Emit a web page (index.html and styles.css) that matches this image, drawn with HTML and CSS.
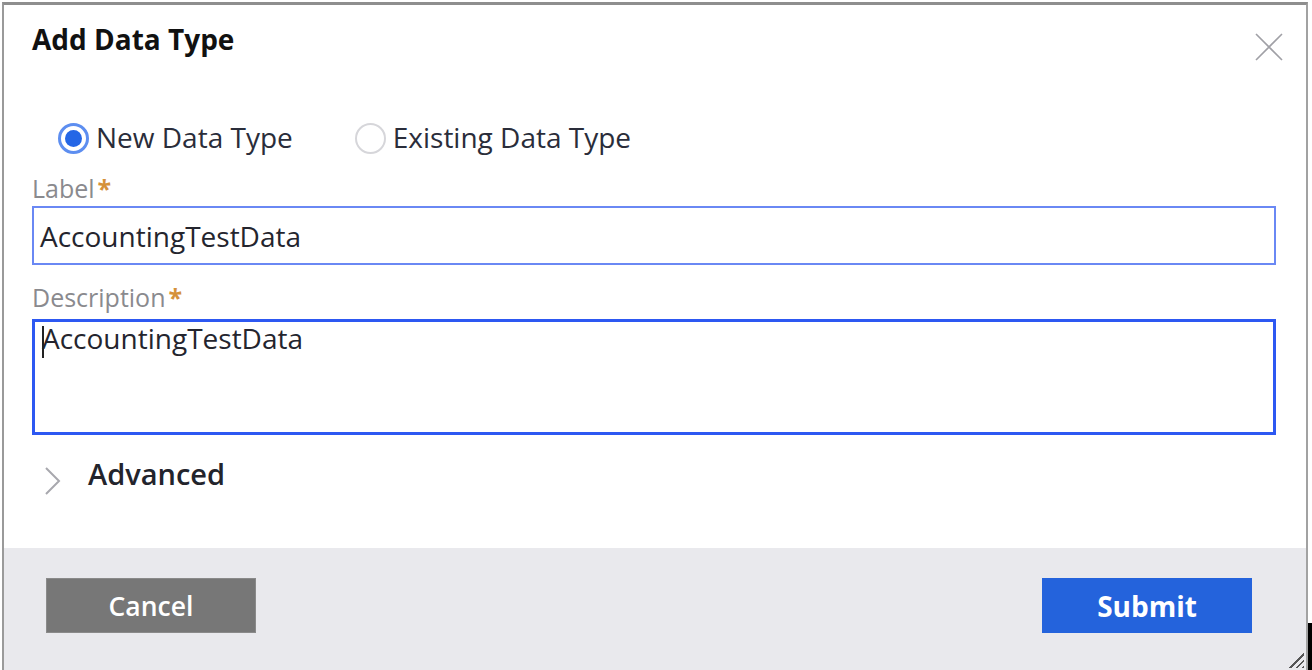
FILE: index.html
```html
<!DOCTYPE html>
<html>
<head>
<meta charset="utf-8">
<link rel="stylesheet" href="styles.css">
</head>
<body>
<div class="dialog">
  <div class="header">
    <h1 class="title">Add Data Type</h1>
    <svg class="close" width="28" height="28" viewBox="0 0 28 28"><path d="M1 1 L27 27 M27 1 L1 27" stroke="#a0a0a6" stroke-width="1.6" fill="none"/></svg>
  </div>
  <div class="content">
    <div class="radios">
      <label class="radio"><span class="dot on"></span><span>New Data Type</span></label>
      <label class="radio"><span class="dot"></span><span>Existing Data Type</span></label>
    </div>
    <div class="field">
      <div class="flabel">Label<span class="req">*</span></div>
      <div class="input">AccountingTestData</div>
    </div>
    <div class="field">
      <div class="flabel">Description<span class="req">*</span></div>
      <div class="textarea"><span class="caret"></span>AccountingTestData</div>
    </div>
    <div class="advanced">
      <svg class="chev" width="20" height="32" viewBox="0 0 20 32"><path d="M3 3 L16 16 L3 29" stroke="#a8a8ae" stroke-width="2" fill="none"/></svg>
      <span>Advanced</span>
    </div>
  </div>
  <div class="footer">
    <button class="btn cancel">Cancel</button>
    <button class="btn submit">Submit</button>
  </div>
  <div class="grip"></div>
</div>
<div class="edge"></div>
</body>
</html>
```
FILE: styles.css
```css
html, body {
  margin: 0;
  padding: 0;
  background: #ffffff;
  font-family: "Open Sans", "Noto Sans", sans-serif;
  overflow: hidden;
}
.dialog {
  position: relative;
  box-sizing: border-box;
  margin: 2px 0 0 2px;
  width: 1306px;
  height: 668px;
  border-top: 3px solid #8e8e8e;
  border-left: 2px solid #9a9a9a;
  border-right: 2px solid #a2a2a2;
  display: flex;
  flex-direction: column;
}
.header {
  display: flex;
  justify-content: space-between;
  align-items: flex-start;
  padding: 15px 23px 0 28px;
}
.title {
  margin: 0;
  font-size: 28px;
  font-weight: 700;
  line-height: 38px;
  color: #111;
}
.close {
  margin-top: 13px;
}
.content {
  flex: 1;
  padding: 0 30px 0 28px;
}
.radios {
  display: flex;
  gap: 62px;
  margin-top: 58px;
  padding-left: 26px;
}
.radio {
  display: flex;
  align-items: center;
  gap: 7px;
  font-size: 28px;
  line-height: 36px;
  color: #2a2d3a;
}
.dot {
  box-sizing: border-box;
  width: 31px;
  height: 31px;
  margin-top: 3px;
  border-radius: 50%;
  border: 2px solid #d6d6da;
  background: #fff;
  position: relative;
}
.dot.on {
  border: 3px solid #5d8ef0;
}
.dot.on::after {
  content: "";
  position: absolute;
  left: 4px;
  top: 4px;
  width: 17px;
  height: 17px;
  border-radius: 50%;
  background: #2466e6;
}
.field {
  display: flex;
  flex-direction: column;
}
.flabel {
  font-size: 25px;
  line-height: 32px;
  color: #8a8a8e;
  margin-top: 17px;
}
.req {
  color: #d5913a;
  margin-left: 3px;
  font-weight: 700;
}
.input {
  box-sizing: border-box;
  height: 59px;
  width: 1244px;
  border: 2px solid #6a88f4;
  padding: 1px 0 0 6px;
  font-size: 28px;
  line-height: 54px;
  color: #24252e;
  margin-top: 2px;
}
.field + .field .flabel {
  margin-top: 16px;
}
.textarea {
  position: relative;
  box-sizing: border-box;
  height: 116px;
  width: 1244px;
  border: 3px solid #2d58f2;
  padding: 0 0 0 7px;
  font-size: 28px;
  line-height: 32px;
  color: #24252e;
  margin-top: 6px;
}
.caret {
  position: absolute;
  left: 7px;
  top: 4px;
  width: 2px;
  height: 32px;
  background: #222;
}
.advanced {
  display: flex;
  align-items: flex-start;
  gap: 25px;
  margin-top: 19px;
  padding-left: 11px;
  font-size: 29px;
  line-height: 40px;
  font-weight: 600;
  color: #23242c;
}
.chev {
  margin-top: 11px;
}
.footer {
  height: 122px;
  box-sizing: border-box;
  background: #e9e9ed;
  display: flex;
  justify-content: space-between;
  align-items: flex-start;
  padding: 30px 54px 0 42px;
}
.btn {
  width: 210px;
  height: 55px;
  border: none;
  font-family: "Open Sans", "Noto Sans", sans-serif;
  color: #fff;
  cursor: pointer;
}
.cancel {
  background: #777777;
  font-size: 26.5px;
  font-weight: 600;
  border: 1px solid #8a8a8a;
}
.submit {
  background: #2463dc;
  font-size: 28px;
  font-weight: 700;
}
.grip {
  position: absolute;
  right: 2px;
  bottom: 2px;
  width: 16px;
  height: 16px;
  background: repeating-linear-gradient(135deg, transparent 0 3px, #555 3px 4.5px);
  clip-path: polygon(100% 0, 100% 100%, 0 100%);
}
.edge {
  position: absolute;
  left: 1308px;
  top: 623px;
  width: 4px;
  height: 47px;
  background: #000;
}
```
